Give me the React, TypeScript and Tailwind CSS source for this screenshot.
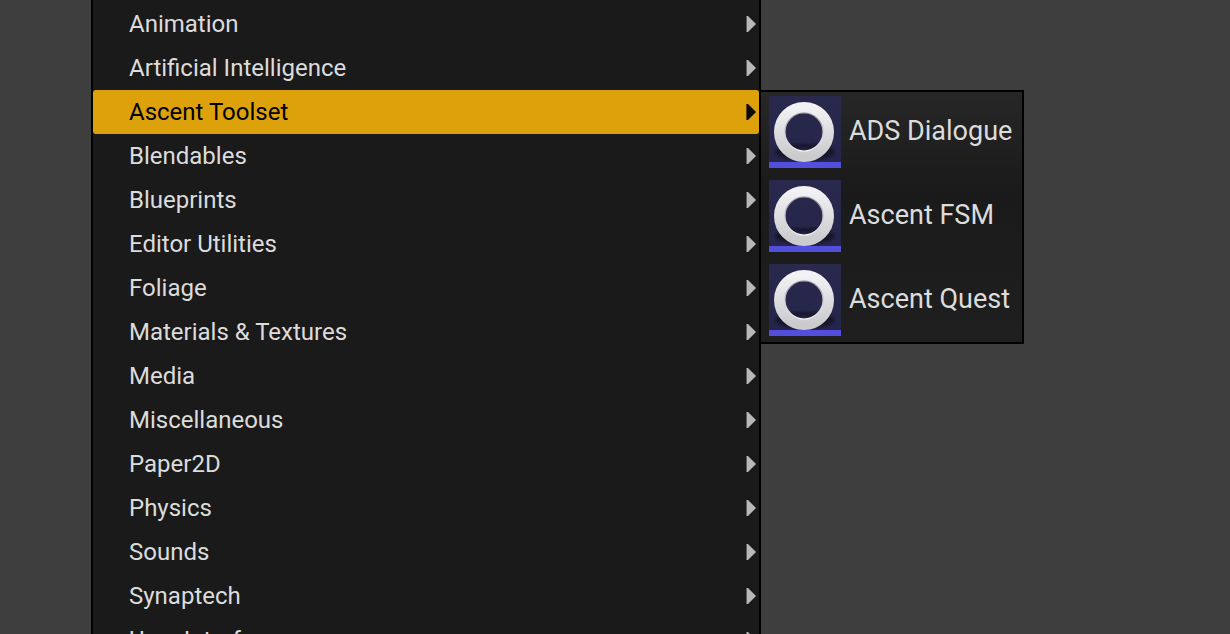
import { useState } from 'react'

interface Asset {
  name: string
}

interface Category {
  name: string
  assets?: Asset[]
}

const CATEGORIES: Category[] = [
  { name: 'Animation' },
  { name: 'Artificial Intelligence' },
  {
    name: 'Ascent Toolset',
    assets: [{ name: 'ADS Dialogue' }, { name: 'Ascent FSM' }, { name: 'Ascent Quest' }],
  },
  { name: 'Blendables' },
  { name: 'Blueprints' },
  { name: 'Editor Utilities' },
  { name: 'Foliage' },
  { name: 'Materials & Textures' },
  { name: 'Media' },
  { name: 'Miscellaneous' },
  { name: 'Paper2D' },
  { name: 'Physics' },
  { name: 'Sounds' },
  { name: 'Synaptech' },
  { name: 'User Interface' },
]

function Arrow({ active }: { active: boolean }) {
  return (
    <svg width="10" height="16" viewBox="0 0 10 16" className="flex-shrink-0" aria-hidden="true">
      <path d="M0 0H1V16H0Z" fill={active ? '#5c4508' : '#606060'} />
      <path d="M1 0H2L9.5 7.5V8.5L2 16H1Z" fill={active ? '#0a0802' : '#b8b8b8'} />
    </svg>
  )
}

function AssetIcon({ id }: { id: string }) {
  return (
    <svg width="72" height="72" viewBox="0 0 72 72" className="flex-shrink-0" aria-hidden="true">
      <defs>
        <linearGradient id={`${id}-bg`} x1="0" y1="0" x2="0" y2="1">
          <stop offset="0" stopColor="#29294d" />
          <stop offset="1" stopColor="#25254b" />
        </linearGradient>
        <linearGradient id={`${id}-ring`} x1="0" y1="0" x2="0" y2="1">
          <stop offset="0" stopColor="#f2f1f4" />
          <stop offset="0.5" stopColor="#dedde1" />
          <stop offset="1" stopColor="#cbcbcd" />
        </linearGradient>
        <linearGradient id={`${id}-edge`} x1="0" y1="0" x2="0" y2="1">
          <stop offset="0" stopColor="#8d9096" />
          <stop offset="0.5" stopColor="#b9bcc2" />
          <stop offset="1" stopColor="#ffffff" />
        </linearGradient>
        <filter id={`${id}-soft`} x="-20%" y="-50%" width="140%" height="200%">
          <feGaussianBlur stdDeviation="1" />
        </filter>
      </defs>
      <rect width="72" height="72" fill={`url(#${id}-bg)`} />
      <ellipse cx="36" cy="56" rx="30" ry="8" fill="#15152c" filter={`url(#${id}-soft)`} />
      <ellipse cx="35" cy="55" rx="17" ry="4" fill="#212144" filter={`url(#${id}-soft)`} />
      <circle cx="35" cy="36" r="24.5" fill="none" stroke={`url(#${id}-ring)`} strokeWidth="11" />
      <circle cx="35" cy="36" r="19" fill="none" stroke={`url(#${id}-edge)`} strokeWidth="1.2" />
      <rect y="66" width="72" height="6" fill="#514fdb" />
    </svg>
  )
}

function AssetMenu({ assets }: { assets: Asset[] }) {
  return (
    <ul className="absolute top-0 left-full flex flex-col gap-3 border-2 border-black bg-linear-to-b from-[#272727] via-[#1a1a1a] via-40% to-[#1f1f1f] pt-1 pr-2.5 pb-1.5 pl-2">
      {assets.map((asset, i) => (
        <li key={asset.name}>
          <button className="flex w-full items-center gap-2 text-left text-[27px] leading-8 whitespace-nowrap text-[#dcdcdc]">
            <AssetIcon id={`asset-${i}`} />
            <span className="pb-0.5">{asset.name}</span>
          </button>
        </li>
      ))}
    </ul>
  )
}

export default function App() {
  const [open, setOpen] = useState('Ascent Toolset')

  return (
    <main className="flex h-screen overflow-hidden bg-[#3e3e3e] pr-[469px] pl-[91px] font-[Roboto,sans-serif]">
      <ul className="min-w-0 flex-1 self-start border-x-2 border-black bg-[#1a1a1a] pt-0.5">
        {CATEGORIES.map((category) => {
          const active = category.name === open
          return (
            <li key={category.name} className="relative">
              <button
                onMouseEnter={() => setOpen(category.name)}
                aria-haspopup="menu"
                aria-expanded={active}
                className={`flex h-11 w-full items-center justify-between rounded-[3px] pr-[3px] pl-9 text-left text-2xl ${
                  active ? 'bg-[#dda20b] text-black' : 'text-[#dcdcdc]'
                }`}
              >
                <span>{category.name}</span>
                <Arrow active={active} />
              </button>
              {active && category.assets && <AssetMenu assets={category.assets} />}
            </li>
          )
        })}
      </ul>
    </main>
  )
}
